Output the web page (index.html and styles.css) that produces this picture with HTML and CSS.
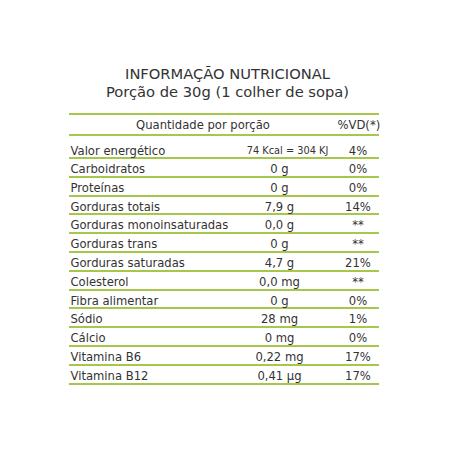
FILE: index.html
```html
<!DOCTYPE html>
<html lang="pt-BR">
<head>
<meta charset="utf-8">
<title>Informação Nutricional</title>
<link rel="stylesheet" href="styles.css">
</head>
<body>
<main class="panel">
  <header class="title">
    <h1>INFORMAÇÃO NUTRICIONAL</h1>
    <p>Porção de 30g (1 colher de sopa)</p>
  </header>
  <div class="table">
    <div class="row head">
      <div class="span2">Quantidade por porção</div>
      <div class="c3">%VD(*)</div>
    </div>
    <div class="row first">
      <div class="c1">Valor energético</div>
      <div class="c2 small">74 Kcal = 304 KJ</div>
      <div class="c3">4%</div>
    </div>
    <div class="row"><div class="c1">Carboidratos</div><div class="c2">0 g</div><div class="c3">0%</div></div>
    <div class="row"><div class="c1">Proteínas</div><div class="c2">0 g</div><div class="c3">0%</div></div>
    <div class="row"><div class="c1">Gorduras totais</div><div class="c2">7,9 g</div><div class="c3">14%</div></div>
    <div class="row"><div class="c1">Gorduras monoinsaturadas</div><div class="c2">0,0 g</div><div class="c3">**</div></div>
    <div class="row"><div class="c1">Gorduras trans</div><div class="c2">0 g</div><div class="c3">**</div></div>
    <div class="row"><div class="c1">Gorduras saturadas</div><div class="c2">4,7 g</div><div class="c3">21%</div></div>
    <div class="row"><div class="c1">Colesterol</div><div class="c2">0,0 mg</div><div class="c3">**</div></div>
    <div class="row"><div class="c1">Fibra alimentar</div><div class="c2">0 g</div><div class="c3">0%</div></div>
    <div class="row"><div class="c1">Sódio</div><div class="c2">28 mg</div><div class="c3">1%</div></div>
    <div class="row"><div class="c1">Cálcio</div><div class="c2">0 mg</div><div class="c3">0%</div></div>
    <div class="row"><div class="c1">Vitamina B6</div><div class="c2">0,22 mg</div><div class="c3">17%</div></div>
    <div class="row"><div class="c1">Vitamina B12</div><div class="c2">0,41 µg</div><div class="c3">17%</div></div>
  </div>
</main>
</body>
</html>
```
FILE: styles.css
```css
html, body {
  margin: 0;
  padding: 0;
  background: #ffffff;
}
body {
  font-family: "DejaVu Sans", sans-serif;
  color: #333333;
}
.panel {
  width: 310px;
  margin: 0 auto;
  padding-top: 65px;
  transform: translateX(-3px);
}
.title {
  text-align: center;
  margin-bottom: 13px;
  padding-left: 8px;
}
.title h1, .title p {
  margin: 0;
  font-weight: normal;
  font-size: 14.7px;
  line-height: 17.5px;
}
.table {
  border-top: 2px solid #a6c84a;
}
.row {
  display: grid;
  grid-template-columns: 153px 116px 41px;
  border-bottom: 2px solid #a6c84a;
  height: 16.8px;
  align-items: center;
  font-size: 11.6px;
  line-height: 13px;
  white-space: nowrap;
}
.row > div {
  padding-top: 4px;
}
.row.head {
  height: 19px;
  grid-template-columns: 269px 41px;
}
.row.head > div {
  padding-top: 1px;
}
.row.first {
  height: 21px;
  align-items: end;
  line-height: 12px;
}
.row.first > div {
  padding-top: 0;
}
.span2 { text-align: center; }
.c1 { padding-left: 2px; }
.c2 { text-align: center; }
.c3 { text-align: center; }
.small {
  font-size: 9.8px;
  padding-left: 16px;
}
```
